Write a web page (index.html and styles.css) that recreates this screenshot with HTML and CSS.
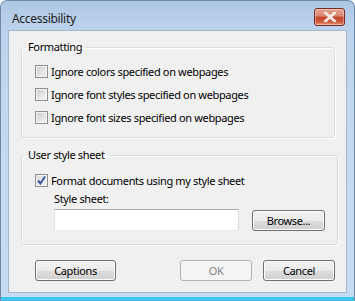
FILE: index.html
```html
<!DOCTYPE html>
<html>
<head>
<meta charset="utf-8">
<link rel="stylesheet" href="styles.css">
</head>
<body>
<div class="window">
  <div class="titlebar">
    <span class="title">Accessibility</span>
    <span class="close"><svg width="14" height="10" viewBox="0 0 14 10"><path d="M2.5 1 L11.5 9 M11.5 1 L2.5 9" stroke="#fff" stroke-width="2.6" stroke-linecap="square"/><path d="M2.5 1 L11.5 9 M11.5 1 L2.5 9" stroke="#f4e4e0" stroke-width="1.6"/></svg></span>
  </div>
  <div class="client">
    <fieldset class="group group-format">
      <legend>Formatting</legend>
      <label class="row"><span class="cb"></span>Ignore colors specified on webpages</label>
      <label class="row"><span class="cb"></span>Ignore font styles specified on webpages</label>
      <label class="row"><span class="cb"></span>Ignore font sizes specified on webpages</label>
    </fieldset>
    <fieldset class="group group-user">
      <legend>User style sheet</legend>
      <label class="row"><span class="cb checked"><svg width="11" height="11" viewBox="0 0 11 11"><path d="M2 5.5 L4.5 8.5 L9 1.5" fill="none" stroke="#3b5aa8" stroke-width="2"/></svg></span>Format documents using my style sheet</label>
      <div class="sub">
        <div class="sublabel">Style sheet:</div>
        <div class="inputrow">
          <span class="textbox"></span>
          <span class="btn btn-browse">Browse...</span>
        </div>
      </div>
    </fieldset>
    <div class="buttons">
      <span class="btn btn-captions">Captions</span>
      <span class="spacer"></span>
      <span class="btn btn-ok disabled">OK</span>
      <span class="btn btn-cancel">Cancel</span>
    </div>
  </div>
  <div class="bottomframe"></div>
</div>
</body>
</html>
```
FILE: styles.css
```css
html, body {
  margin: 0;
  padding: 0;
  width: 355px;
  height: 301px;
  overflow: hidden;
  background: #ffffff;
}
.window {
  width: 355px;
  height: 301px;
  box-sizing: border-box;
  background: linear-gradient(180deg, #aec7e4 0px, #bcd3ed 30px, #c4d9ef 120px, #c7dcf2 301px);
  border-radius: 7px 7px 0 0;
  border: 1px solid #6f8aa8;
  border-bottom: none;
  display: flex;
  flex-direction: column;
  font-family: "Noto Sans", "DejaVu Sans", sans-serif;
  font-size: 11px;
  letter-spacing: -0.35px;
  color: #000;
}
.titlebar {
  height: 29px;
  display: flex;
  align-items: center;
  padding: 0 9px 0 11px;
  flex: none;
}
.title {
  flex: 1;
  font-size: 12px;
  letter-spacing: -0.3px;
  color: #1e1e1e;
  margin-top: 6px;
}
.close {
  width: 29px;
  height: 16px;
  margin-top: 3px;
  border: 1px solid #7a2a22;
  border-radius: 3px;
  background: linear-gradient(180deg, #e8a493 0%, #d88670 45%, #c4462a 50%, #d05a3c 80%, #e69a7a 100%);
  display: flex;
  align-items: center;
  justify-content: center;
  box-shadow: inset 0 0 0 1px rgba(255,255,255,0.35);
}
.client {
  margin: 0 7px;
  height: 263px;
  background: #f0f0f0;
  border: 1px solid #a3b6ca;
  box-sizing: border-box;
  padding: 8px 11px 0 12px;
  display: flex;
  flex-direction: column;
  flex: none;
}
.bottomframe {
  flex: 1;
  border-bottom: 4px solid #3cc7ea;
}
.group {
  margin: 0;
  padding: 0 12px 0 13px;
  border: 1px solid #d5dfe5;
  border-radius: 3px;
  box-shadow: inset 1px 1px 0 #ffffff, 1px 1px 0 #ffffff;
}
.group legend {
  padding: 0 3px;
  margin-left: -10px;
  line-height: 16px;
  color: #000;
}
.group-format {
  padding-top: 5px;
  padding-bottom: 8px;
}
.group-user {
  margin-top: 9px;
  padding-top: 6px;
  padding-bottom: 13px;
}
.row {
  display: flex;
  align-items: center;
  height: 23px;
  gap: 3px;
}
.cb {
  width: 11px;
  height: 11px;
  border: 1px solid #8f8f8f;
  background: linear-gradient(135deg, #cbcbcb 0%, #e6e6e6 60%, #f4f4f4 100%);
  box-shadow: inset 0 0 0 1px #f4f4f4;
  flex: none;
  display: flex;
  align-items: center;
  justify-content: center;
}
.cb.checked {
  background: linear-gradient(135deg, #d6d6d6 0%, #ececec 60%, #f6f6f6 100%);
}
.sub {
  padding-left: 19px;
}
.sublabel {
  height: 15px;
  line-height: 15px;
  margin-top: -1px;
}
.inputrow {
  display: flex;
  align-items: center;
  margin-top: 3px;
  gap: 13px;
}
.textbox {
  width: 183px;
  height: 20px;
  background: #fff;
  border: 1px solid #abadb3;
  border-left-color: #e2e3ea;
  border-right-color: #dbdfe6;
  border-bottom-color: #e3e9ef;
}
.btn {
  height: 19px;
  box-sizing: content-box;
  border: 1px solid #707070;
  border-radius: 3px;
  background: linear-gradient(180deg, #f2f2f2 0%, #ebebeb 50%, #dddddd 51%, #cfcfcf 100%);
  box-shadow: inset 0 0 0 1px #fcfcfc;
  display: flex;
  align-items: center;
  justify-content: center;
  color: #000;
}
.btn-browse {
  width: 71px;
}
.buttons {
  display: flex;
  margin-top: 15px;
  padding-left: 14px;
}
.btn-captions {
  width: 79px;
}
.spacer {
  flex: 1;
}
.btn-ok, .btn-cancel {
  width: 70px;
}
.btn-cancel {
  margin-left: 11px;
}
.btn.disabled {
  border-color: #adb2b5;
  background: #f4f4f4;
  box-shadow: none;
  color: #838383;
}
```
